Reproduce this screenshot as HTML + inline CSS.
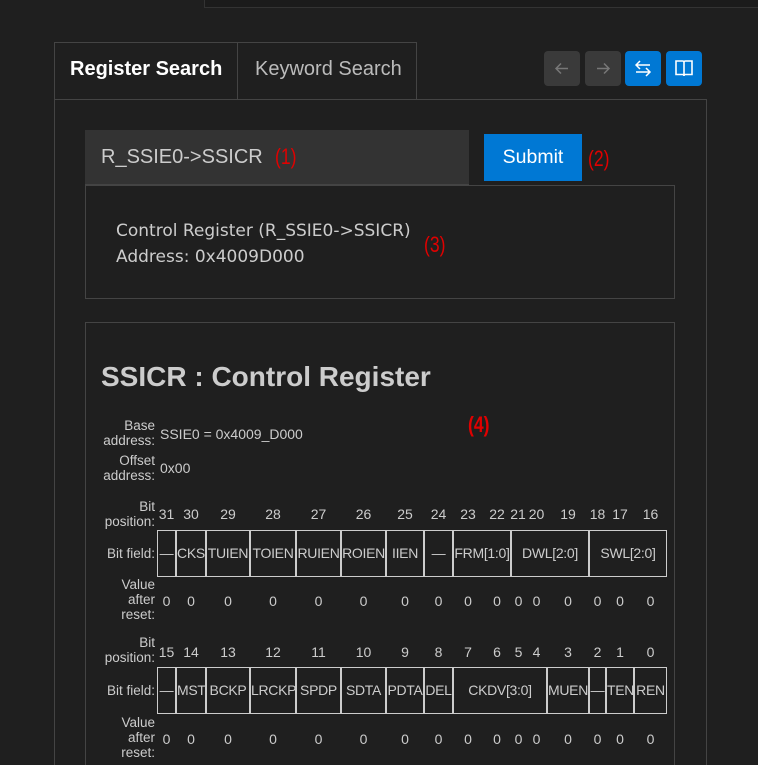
<!DOCTYPE html>
<html style="width:758px;height:765px;overflow:hidden"><head><meta charset="utf-8"><style>
*{margin:0;padding:0;box-sizing:border-box}
body{width:758px;height:765px;background:#1f1f1f;font-family:"Liberation Sans",sans-serif;color:#ccc;position:relative;overflow:hidden}
.a{position:absolute;white-space:nowrap}
.c{position:absolute;text-align:center;font-size:14px;white-space:nowrap}
.l{position:absolute;right:603px;text-align:right;font-size:13.5px;line-height:15px;color:#ccc}
.f{position:absolute;top:530px;height:47px;border:1px solid #ccc;line-height:45px;text-align:center;font-size:14px;margin-left:-1px;letter-spacing:-0.3px}
.red{color:#e00000;font-family:"Liberation Sans",sans-serif;font-size:22px;transform:scaleX(0.8);transform-origin:left top}
.btn{position:absolute;top:51px;width:36px;height:35px;border-radius:4px}
</style></head><body>
<div class="a" style="left:204px;top:-1px;width:560px;height:9px;border:1px solid #333;background:#1b1b1b"></div>

<div class="a" style="left:54px;top:42px;width:184px;height:58px;border:1px solid #444;border-bottom:none;background:#1f1f1f"></div>
<div class="a" style="left:237px;top:42px;width:180px;height:58px;border:1px solid #444;border-bottom:none"></div>
<div class="a" style="left:70px;top:58px;font-size:20px;font-weight:bold;color:#fff">Register Search</div>
<div class="a" style="left:255px;top:58px;font-size:20px;color:#bbb">Keyword Search</div>

<div class="btn" style="left:544px;background:#3a3a3a"><svg width="36" height="35"><path d="M24 17.5H12M17 12.5l-5 5 5 5" stroke="#777" stroke-width="1.5" fill="none"/></svg></div>
<div class="btn" style="left:585px;background:#3a3a3a"><svg width="36" height="35"><path d="M12 17.5H24M19 12.5l5 5-5 5" stroke="#777" stroke-width="1.5" fill="none"/></svg></div>
<div class="btn" style="left:625px;background:#0078d4"><svg width="36" height="35"><path d="M11 14H25M15 10l-4 4 4 4M25 21H11M21 17l4 4-4 4" stroke="#fff" stroke-width="1.5" fill="none"/></svg></div>
<div class="btn" style="left:666px;background:#0078d4"><svg width="36" height="35"><path d="M10 10h6.5c1 0 1.5.6 1.5 1.5V25c0-1-.6-1.5-1.5-1.5H10zM26 10h-6.5c-1 0-1.5.6-1.5 1.5V25c0-1 .6-1.5 1.5-1.5H26z" stroke="#fff" stroke-width="1.6" fill="none"/></svg></div>

<div class="a" style="left:54px;top:99px;width:653px;height:680px;border:1px solid #444"></div>

<div class="a" style="left:85px;top:130px;width:384px;height:55px;background:#333;border-bottom:1px solid #444"></div>
<div class="a" style="left:101px;top:146px;font-size:20px;color:#ccc">R_SSIE0-&gt;SSICR</div>
<div class="a red" style="left:275px;top:144px">(1)</div>
<div class="a" style="left:484px;top:134px;width:98px;height:47px;background:#0078d4;color:#fff;font-size:19.5px;text-align:center;line-height:46px">Submit</div>
<div class="a red" style="left:588px;top:146px">(2)</div>

<div class="a" style="left:85px;top:185px;width:590px;height:114px;border:1px solid #444"></div>
<div class="a" style="left:116px;top:218px;line-height:26px;color:#ccc;font-family:'DejaVu Sans','Liberation Sans',sans-serif;font-size:17px">Control Register (R_SSIE0-&gt;SSICR)<br>Address: 0x4009D000</div>
<div class="a red" style="left:424px;top:232px">(3)</div>

<div class="a" style="left:85px;top:322px;width:590px;height:460px;border:1px solid #444"></div>
<div class="a" style="left:101px;top:361px;font-size:28px;font-weight:bold;color:#ccc">SSICR : Control Register</div>
<div class="a red" style="left:468px;top:412px;font-weight:bold">(4)</div>

<div class="l" style="top:418px">Base<br>address:</div>
<div class="a" style="left:160px;top:426px;font-size:14px">SSIE0 = 0x4009_D000</div>
<div class="l" style="top:453px">Offset<br>address:</div>
<div class="a" style="left:160px;top:460px;font-size:14px">0x00</div>

<div class="l" style="top:499px">Bit<br>position:</div>
<div class="l" style="top:546px">Bit field:</div>
<div class="l" style="top:577px">Value<br>after<br>reset:</div>

<div class="l" style="top:635px">Bit<br>position:</div>
<div class="l" style="top:683px">Bit field:</div>
<div class="l" style="top:715px">Value<br>after<br>reset:</div>

<div style="position:absolute;top:506px;left:0">
<div class="c" style="left:157px;width:19px">31</div><div class="c" style="left:176px;width:30px">30</div><div class="c" style="left:206px;width:44px">29</div><div class="c" style="left:250px;width:46px">28</div><div class="c" style="left:296px;width:45px">27</div><div class="c" style="left:341px;width:45px">26</div><div class="c" style="left:386px;width:38px">25</div><div class="c" style="left:424px;width:29px">24</div><div class="c" style="left:453px;width:30px">23</div><div class="c" style="left:483px;width:28px">22</div><div class="c" style="left:510px;width:16px">21</div><div class="c" style="left:526px;width:21px">20</div><div class="c" style="left:547px;width:42px">19</div><div class="c" style="left:589px;width:17px">18</div><div class="c" style="left:606px;width:28px">17</div><div class="c" style="left:634px;width:33px">16</div>
</div>
<div style="position:absolute;top:593px;left:0">
<div class="c" style="left:157px;width:19px">0</div><div class="c" style="left:176px;width:30px">0</div><div class="c" style="left:206px;width:44px">0</div><div class="c" style="left:250px;width:46px">0</div><div class="c" style="left:296px;width:45px">0</div><div class="c" style="left:341px;width:45px">0</div><div class="c" style="left:386px;width:38px">0</div><div class="c" style="left:424px;width:29px">0</div><div class="c" style="left:453px;width:30px">0</div><div class="c" style="left:483px;width:28px">0</div><div class="c" style="left:511px;width:15px">0</div><div class="c" style="left:526px;width:21px">0</div><div class="c" style="left:547px;width:42px">0</div><div class="c" style="left:589px;width:17px">0</div><div class="c" style="left:606px;width:28px">0</div><div class="c" style="left:634px;width:33px">0</div>
</div>
<div class="f" style="left:158px;width:19px">—</div><div class="f" style="left:177px;width:30px">CKS</div><div class="f" style="left:207px;width:44px">TUIEN</div><div class="f" style="left:251px;width:46px">TOIEN</div><div class="f" style="left:297px;width:45px">RUIEN</div><div class="f" style="left:342px;width:45px">ROIEN</div><div class="f" style="left:387px;width:38px">IIEN</div><div class="f" style="left:425px;width:29px">—</div><div class="f" style="left:454px;width:58px">FRM[1:0]</div><div class="f" style="left:512px;width:78px">DWL[2:0]</div><div class="f" style="left:590px;width:78px">SWL[2:0]</div>

<div style="position:absolute;top:644px;left:0">
<div class="c" style="left:157px;width:19px">15</div><div class="c" style="left:176px;width:30px">14</div><div class="c" style="left:206px;width:44px">13</div><div class="c" style="left:250px;width:46px">12</div><div class="c" style="left:296px;width:45px">11</div><div class="c" style="left:341px;width:45px">10</div><div class="c" style="left:386px;width:38px">9</div><div class="c" style="left:424px;width:29px">8</div><div class="c" style="left:453px;width:30px">7</div><div class="c" style="left:483px;width:28px">6</div><div class="c" style="left:511px;width:15px">5</div><div class="c" style="left:526px;width:21px">4</div><div class="c" style="left:547px;width:42px">3</div><div class="c" style="left:589px;width:17px">2</div><div class="c" style="left:606px;width:28px">1</div><div class="c" style="left:634px;width:33px">0</div>
</div>
<div style="position:absolute;top:731px;left:0">
<div class="c" style="left:157px;width:19px">0</div><div class="c" style="left:176px;width:30px">0</div><div class="c" style="left:206px;width:44px">0</div><div class="c" style="left:250px;width:46px">0</div><div class="c" style="left:296px;width:45px">0</div><div class="c" style="left:341px;width:45px">0</div><div class="c" style="left:386px;width:38px">0</div><div class="c" style="left:424px;width:29px">0</div><div class="c" style="left:453px;width:30px">0</div><div class="c" style="left:483px;width:28px">0</div><div class="c" style="left:511px;width:15px">0</div><div class="c" style="left:526px;width:21px">0</div><div class="c" style="left:547px;width:42px">0</div><div class="c" style="left:589px;width:17px">0</div><div class="c" style="left:606px;width:28px">0</div><div class="c" style="left:634px;width:33px">0</div>
</div>
<div style="position:absolute;top:137px;left:0;width:758px;height:0">
<div class="f" style="left:158px;width:19px">—</div><div class="f" style="left:177px;width:30px">MST</div><div class="f" style="left:207px;width:44px">BCKP</div><div class="f" style="left:251px;width:46px">LRCKP</div><div class="f" style="left:297px;width:45px">SPDP</div><div class="f" style="left:342px;width:45px">SDTA</div><div class="f" style="left:387px;width:38px">PDTA</div><div class="f" style="left:425px;width:29px">DEL</div><div class="f" style="left:454px;width:94px">CKDV[3:0]</div><div class="f" style="left:548px;width:42px">MUEN</div><div class="f" style="left:590px;width:17px">—</div><div class="f" style="left:607px;width:28px">TEN</div><div class="f" style="left:635px;width:33px">REN</div>
</div>
</body></html>
